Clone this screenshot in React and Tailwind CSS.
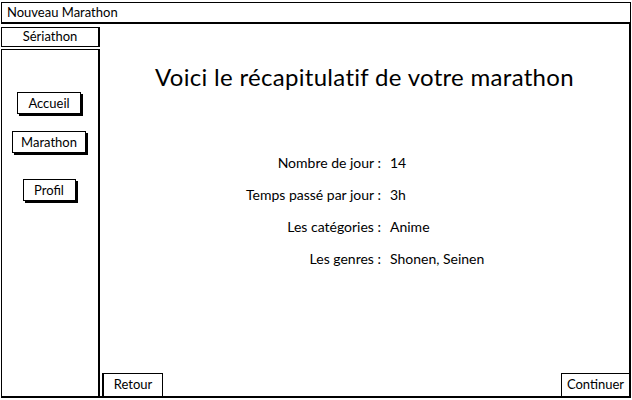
const rows = [
  { label: 'Nombre de jour :', value: '14' },
  { label: 'Temps passé par jour :', value: '3h' },
  { label: 'Les catégories :', value: 'Anime' },
  { label: 'Les genres :', value: 'Shonen, Seinen' },
];

const SideButton = ({ children, className }) => (
  <button className={`h-[22px] border border-black bg-white text-[13px] leading-none shadow-[2px_2px_0_#000] ${className}`}>
    {children}
  </button>
);

const App = () => {
  return (
    <div className="w-[632px] h-[400px] bg-white text-black flex flex-col font-['Lato',sans-serif] overflow-hidden">
      <div className="ml-[1px] mt-[2px] w-[630px] h-[22px] border border-b-2 border-black flex items-center pl-[5px] text-[13px]">
        Nouveau Marathon
      </div>

      <div className="flex flex-1 min-h-0 pb-[2px]">
        <div className="w-[99px] flex flex-col ml-[1px]">
          <div className="mt-[3px] h-[20px] border border-r-2 border-black flex items-center justify-center text-[13px]">
            Sériathon
          </div>
          <div className="mt-[2px] flex-1 border border-r-2 border-b-2 border-black flex flex-col items-center pt-[42px]">
            <SideButton className="w-[64px] -ml-[2px]">Accueil</SideButton>
            <SideButton className="w-[74px] mt-[17px] -ml-[2px]">Marathon</SideButton>
            <SideButton className="w-[53px] mt-[26px] -ml-[2px]">Profil</SideButton>
          </div>
        </div>

        <div className="flex-1 border-r-2 border-b-2 border-black flex flex-col mr-[1px]">
          <h1 className="mt-[39px] text-center text-[24px] leading-[28px] tracking-[0.3px]">
            Voici le récapitulatif de votre marathon
          </h1>

          <div className="mt-[64px] flex flex-col gap-[16px] text-[14px] leading-[16px]">
            {rows.map((row) => (
              <div key={row.label} className="flex">
                <div className="w-[281px] text-right">{row.label}</div>
                <div className="pl-[9px]">{row.value}</div>
              </div>
            ))}
          </div>

          <div className="mt-auto flex justify-between items-end">
            <button className="ml-[2px] h-[23px] w-[61px] border border-l-2 border-b-0 border-black text-[13px]">
              Retour
            </button>
            <button className="h-[23px] w-[68px] border border-r-0 border-b-0 border-black text-[13px]">
              Continuer
            </button>
          </div>
        </div>
      </div>
    </div>
  );
};

export default App;
